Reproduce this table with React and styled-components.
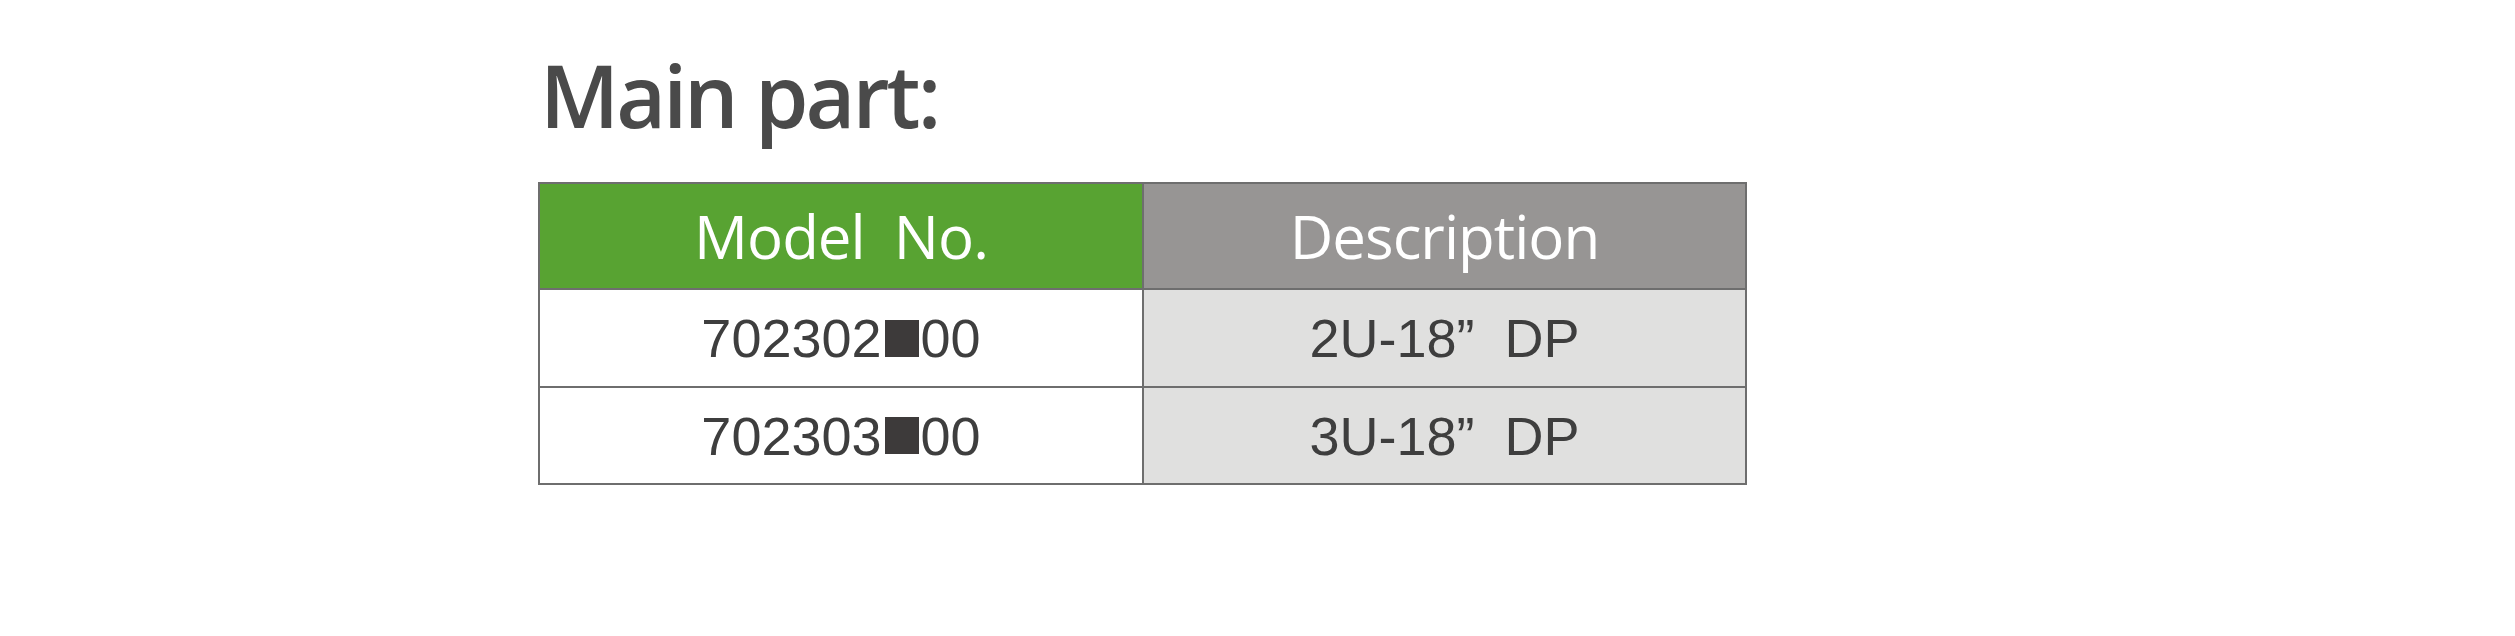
import React from 'react'
import styled, { createGlobalStyle } from 'styled-components'

const GlobalStyle = createGlobalStyle`
  body {
    margin: 0;
    background: #ffffff;
  }
`

const Page = styled.div`
  width: 2515px;
  height: 636px;
  padding: 45px 0 0 538px;
  box-sizing: border-box;
`

const Title = styled.h1`
  margin: 0 0 37px 2px;
  font-family: 'Open Sans', sans-serif;
  font-weight: 600;
  font-size: 86px;
  letter-spacing: -3px;
  line-height: 100px;
  color: #4a4a4a;
`

const Table = styled.div`
  display: grid;
  grid-template-columns: 602px 601px;
  grid-template-rows: 104px 96px 95px;
  width: 1209px;
  border: 2px solid #6e6e6e;
  box-sizing: border-box;
  background: #6e6e6e;
  gap: 2px;
`

const HeadCell = styled.div`
  display: flex;
  align-items: center;
  justify-content: center;
  background: ${p => p.$tone === 'green' ? '#58a332' : '#979594'};
  color: #ffffff;
  font-family: 'Open Sans', sans-serif;
  font-size: 60px;
  letter-spacing: -1px;
  white-space: pre;
`

const Cell = styled.div`
  display: flex;
  align-items: center;
  justify-content: center;
  background: ${p => p.$shaded ? '#e0e0df' : '#ffffff'};
  color: #3e3e3e;
  font-family: 'Liberation Sans', Arial, sans-serif;
  font-size: 54px;
  white-space: pre;
`

const Box = styled.span`
  display: inline-block;
  width: 34px;
  height: 37px;
  margin: 0 2px 0 3px;
  background: #3d3a3a;
`

const rows = [
  { pre: '702302', post: '00', desc: '2U-18\u201d  DP' },
  { pre: '702303', post: '00', desc: '3U-18\u201d  DP' },
]

export default function App() {
  return (
    <>
      <GlobalStyle />
      <Page>
        <Title>Main part:</Title>
        <Table>
          <HeadCell $tone='green'>Model  No.</HeadCell>
          <HeadCell>Description</HeadCell>
          {rows.map(r => (
            <React.Fragment key={r.pre}>
              <Cell>{r.pre}<Box />{r.post}</Cell>
              <Cell $shaded>{r.desc}</Cell>
            </React.Fragment>
          ))}
        </Table>
      </Page>
    </>
  )
}
